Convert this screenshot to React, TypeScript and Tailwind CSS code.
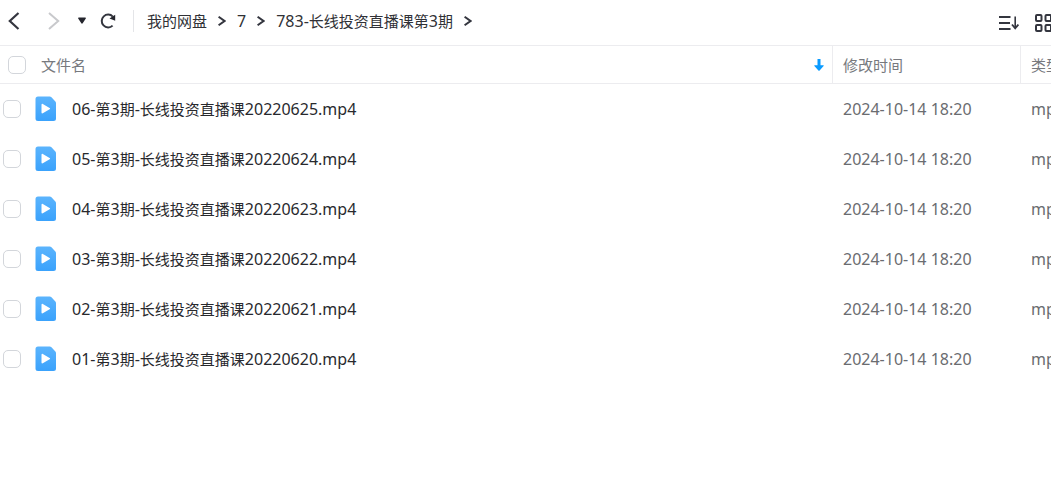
import React from "react";

const breadcrumbs = ["我的网盘", "7", "783-长线投资直播课第3期"];

const files = [
  { name: "06-第3期-长线投资直播课20220625.mp4", modified: "2024-10-14 18:20", type: "mp4文件" },
  { name: "05-第3期-长线投资直播课20220624.mp4", modified: "2024-10-14 18:20", type: "mp4文件" },
  { name: "04-第3期-长线投资直播课20220623.mp4", modified: "2024-10-14 18:20", type: "mp4文件" },
  { name: "03-第3期-长线投资直播课20220622.mp4", modified: "2024-10-14 18:20", type: "mp4文件" },
  { name: "02-第3期-长线投资直播课20220621.mp4", modified: "2024-10-14 18:20", type: "mp4文件" },
  { name: "01-第3期-长线投资直播课20220620.mp4", modified: "2024-10-14 18:20", type: "mp4文件" },
];

// Latin letters and digits run one step larger than the Chinese around them
function MixedText({ text }: { text: string }) {
  return (
    <span className="whitespace-nowrap">
      {text.split(/([\x20-\x7e]+)/).map((part, index) =>
        /^[\x20-\x7e]/.test(part) ? (
          <span key={index} className="text-[16px]">{part}</span>
        ) : (
          part
        )
      )}
    </span>
  );
}

function Checkbox({ label }: { label: string }) {
  return (
    <input
      type="checkbox"
      aria-label={label}
      className="h-[18px] w-[18px] shrink-0 appearance-none rounded-[5px] border border-[#d3d6db] bg-white checked:border-[#06a7ff] checked:bg-[#06a7ff]"
    />
  );
}

function VideoIcon() {
  return (
    <svg width="22" height="26" viewBox="0 0 22 26" className="shrink-0" aria-hidden="true">
      <defs>
        <linearGradient id="video-file" x1="0" y1="0" x2="0" y2="1">
          <stop offset="0" stopColor="#5bb4fd" />
          <stop offset="1" stopColor="#3aa2fc" />
        </linearGradient>
      </defs>
      <path
        d="M3 .5h11.8c.6 0 1 .2 1.4.6l4.2 4.5c.4.4.6.9.6 1.4v15.5a2.5 2.5 0 0 1-2.5 2.5H3a2.5 2.5 0 0 1-2.5-2.5V3A2.5 2.5 0 0 1 3 .5Z"
        fill="url(#video-file)"
      />
      <path d="M6.5 8.7c0-.8.6-1.2 1.3-.8l6.8 4c.7.4.7 1 0 1.4l-6.8 4c-.7.4-1.3 0-1.3-.8Z" fill="#fff" />
    </svg>
  );
}

function Separator() {
  return (
    <svg width="8" height="10" viewBox="0 0 8 10" fill="none" stroke="#34363f" strokeWidth="2" aria-hidden="true">
      <path d="M.6.8 6.5 5 .6 9.2" />
    </svg>
  );
}

function Toolbar() {
  return (
    <header className="flex h-[46px] items-center overflow-hidden border-b border-[#ececef] pb-1 pl-2">
      <button type="button" aria-label="后退" className="shrink-0">
        <svg width="12" height="18" viewBox="0 0 12 18" fill="none" stroke="#34363f" strokeWidth="2.2">
          <path d="M10.500 1 1.800 9l8.700 8" />
        </svg>
      </button>
      <button type="button" aria-label="前进" className="ml-7 shrink-0">
        <svg width="12" height="18" viewBox="0 0 12 18" fill="none" stroke="#c8c9cc" strokeWidth="2">
          <path d="m1 1 9.200 8L1 17" />
        </svg>
      </button>
      <button type="button" aria-label="历史记录" className="ml-[18px] shrink-0">
        <svg width="8" height="7" viewBox="0 0 8 7" fill="#25262e">
          <path d="M.8.4h6.4c.6 0 .9.5.6 1L4.700 6.300c-.3.500-1.100.500-1.400 0L.2 1.400c-.3-.5 0-1 .6-1Z" />
        </svg>
      </button>
      <button type="button" aria-label="刷新" className="ml-[14px] shrink-0">
        <svg width="16" height="16" viewBox="0 0 16 16" fill="none" stroke="#34363f" strokeWidth="2">
          <path d="M12.600 12.600A6.400 6.400 0 1 1 12.800 3.600" />
          <path d="M15.200 1.700v6.100l-5.700-2.300Z" fill="#25262e" stroke="none" />
        </svg>
      </button>
      <div className="ml-[17px] h-[22px] w-px shrink-0 bg-[#e4e5e8]" />
      <nav aria-label="路径" className="ml-[13px] flex items-center">
        {breadcrumbs.map((crumb) => (
          <div key={crumb} className="flex items-center">
            <a href="#" className="text-[#303136]">
              <MixedText text={crumb} />
            </a>
            <span className="mx-[11px]">
              <Separator />
            </span>
          </div>
        ))}
      </nav>
      <button type="button" aria-label="排序" className="ml-auto shrink-0 pt-1">
        <svg width="21" height="16" viewBox="0 0 21 16" fill="none" stroke="#34363f" strokeWidth="2">
          <path d="M1 2h11.500M1 8h11M1 14h11.500" />
          <path d="M17.200 1.500v11" strokeWidth="1.600" />
          <path d="M14 9.500l3.200 3.800 3.200-3.800" strokeWidth="1.800" />
        </svg>
      </button>
      <button type="button" aria-label="网格视图" className="ml-4 shrink-0 pt-1">
        <svg width="16" height="18" viewBox="0 0 16 18" fill="none" stroke="#34363f" strokeWidth="2">
          <rect x="1" y="1" width="5.500" height="6" rx="1" />
          <rect x="10.500" y="1" width="5.500" height="6" rx="1" />
          <rect x="1" y="11" width="5.500" height="6" rx="1" />
          <rect x="10.500" y="11" width="5.500" height="6" rx="1" />
        </svg>
      </button>
    </header>
  );
}

export default function App() {
  return (
    <div className="min-h-screen overflow-hidden bg-white font-['Noto_Sans','Noto_Sans_CJK_SC',sans-serif] text-[15px] leading-5">
      <Toolbar />
      <table className="w-full table-fixed border-separate border-spacing-0 text-left">
        <colgroup>
          <col />
          <col className="w-[188px]" />
          <col className="w-[30px]" />
        </colgroup>
        <thead className="text-[#77797e]">
          <tr className="h-[38px]">
            <th className="border-b border-r border-[#ececef] p-0 font-normal">
              <div className="flex items-center px-2">
                <Checkbox label="全选" />
                <span className="ml-[15px]">文件名</span>
                <button type="button" aria-label="按文件名排序" className="ml-auto">
                  <svg width="10" height="12" viewBox="0 0 10 12" fill="#0a9bff">
                    <path d="M3.500 0h3v6.200h2.700c.5 0 .7.500.4.800L5.600 11.500c-.3.400-.9.400-1.200 0L.4 7c-.3-.3-.1-.8.400-.8h2.700Z" />
                  </svg>
                </button>
              </div>
            </th>
            <th className="border-b border-r border-[#ececef] p-0 pl-[10px] font-normal">修改时间</th>
            <th className="overflow-hidden whitespace-nowrap border-b border-[#ececef] p-0 pl-[10px] font-normal">类型</th>
          </tr>
        </thead>
        <tbody>
          {files.map((file) => (
            <tr key={file.name} className="h-[50px] hover:bg-[#f7f9fc]">
              <td className="p-0">
                <div className="flex items-center pl-[3px]">
                  <Checkbox label={file.name} />
                  <div className="ml-[14px] flex items-center gap-[15px] text-[#28292d]">
                    <VideoIcon />
                    <MixedText text={file.name} />
                  </div>
                </div>
              </td>
              <td className="whitespace-nowrap p-0 pl-[10px] text-[16px] text-[#6a6c70]">{file.modified}</td>
              <td className="overflow-hidden whitespace-nowrap p-0 pl-[10px] text-[#6a6c70]">
                <MixedText text={file.type} />
              </td>
            </tr>
          ))}
        </tbody>
      </table>
    </div>
  );
}
